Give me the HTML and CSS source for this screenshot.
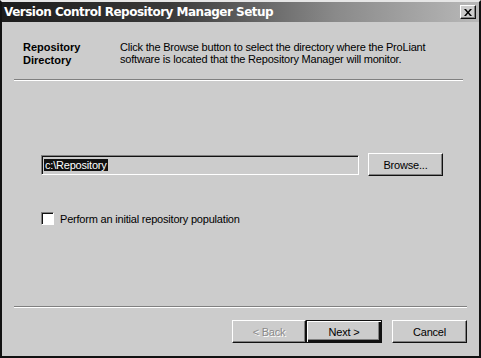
FILE: index.html
```html
<!DOCTYPE html>
<html lang="en">
<head>
  <meta charset="UTF-8">
  <title>Version Control Repository Manager Setup</title>
  <link rel="stylesheet" href="styles.css">
</head>

<body>
  <div class="window">
    <div class="titlebar">
      <span class="title">Version Control Repository Manager Setup</span>
      <button class="close" type="button">
        <svg width="8" height="7" viewBox="0 0 8 7">
          <path d="M0 0h2l2 2.5L6 0h2L5 3.5 8 7H6L4 4.5 2 7H0l3-3.5z" fill="#000"/>
        </svg>
      </button>
    </div>

    <div class="header">
      <div class="heading">Repository<br>Directory</div>
      <p class="intro">Click the Browse button to select the directory where the ProLiant software is located that the Repository Manager will monitor.</p>
    </div>
    <hr class="sep">

    <div class="body">
      <div class="pathrow">
        <div class="field"><span class="selected">c:\Repository</span></div>
        <button class="btn" type="button">Browse...</button>
      </div>
      <label class="check">
        <span class="box"></span>
        Perform an initial repository population
      </label>
    </div>

    <hr class="sep bottom">
    <div class="footer">
      <button class="btn disabled" type="button">&lt; Back</button>
      <button class="btn default" type="button">Next &gt;</button>
      <button class="btn cancel" type="button">Cancel</button>
    </div>
  </div>
</body>
</html>
```

FILE: styles.css
```css
html, body {
  margin: 0;
  padding: 0;
}
body {
  font-family: "Liberation Sans", Arial, sans-serif;
  font-size: 11px;
  letter-spacing: -0.2px;
  color: #000;
  background: #cccccc;
}
.window {
  box-sizing: border-box;
  width: 481px;
  height: 358px;
  background: #cccccc;
  border-top: 2px solid #e6e6e6;
  border-left: 2px solid #111;
  border-right: 2px solid #111;
  border-bottom: 2px solid #111;
  display: flex;
  flex-direction: column;
}

/* title bar */
.titlebar {
  height: 20px;
  display: flex;
  align-items: center;
  justify-content: space-between;
  padding: 0 3px 0 2px;
  background: linear-gradient(to right, #1c1c1c 0%, #3a3a3a 35%, #8a8a8a 70%, #b8b8b8 100%);
}
.title {
  color: #fff;
  font-family: "DejaVu Sans", Verdana, sans-serif;
  font-weight: bold;
  font-size: 12px;
  letter-spacing: -0.5px;
}
.close {
  box-sizing: border-box;
  width: 16px;
  height: 14px;
  padding: 0;
  display: flex;
  align-items: center;
  justify-content: center;
  background: #cccccc;
  border: 1px solid;
  border-color: #fff #111 #111 #fff;
  box-shadow: inset -1px -1px 0 #808080;
}

/* header */
.header {
  display: flex;
  padding: 19px 0 0 21px;
  height: 38px;
}
.heading {
  width: 97px;
  font-weight: bold;
  font-size: 11px;
  letter-spacing: 0;
  line-height: 13px;
}
.intro {
  margin: 0;
  width: 330px;
  line-height: 12px;
}
.sep {
  margin: 0 16px 0 12px;
  height: 0;
  border: 0;
  border-top: 1px solid #808080;
  border-bottom: 1px solid #fff;
}
.sep.bottom {
  margin-right: 12px;
}

/* body */
.body {
  flex: 1;
  padding: 72px 0 0 39px;
}
.pathrow {
  display: flex;
  align-items: center;
}
.field {
  box-sizing: border-box;
  width: 318px;
  height: 20px;
  background: #cccccc;
  border: 1px solid;
  border-color: #808080 #fff #fff #808080;
  box-shadow: inset 1px 1px 0 #111;
  padding: 3px 0 0 2px;
}
.selected {
  background: #111;
  color: #fff;
  padding: 0 1px;
}
.pathrow .btn {
  margin-left: 9px;
}
.check {
  display: flex;
  align-items: center;
  margin-top: 36px;
  gap: 6px;
}
.box {
  box-sizing: border-box;
  width: 13px;
  height: 13px;
  background: #fff;
  border: 1px solid;
  border-color: #808080 #fff #fff #808080;
  box-shadow: inset 1px 1px 0 #111;
}

/* buttons */
.btn {
  box-sizing: border-box;
  width: 75px;
  height: 23px;
  font-family: "Liberation Sans", Arial, sans-serif;
  font-size: 11px;
  letter-spacing: -0.2px;
  color: #000;
  background: #cccccc;
  border: 1px solid;
  border-color: #fff #111 #111 #fff;
  box-shadow: inset -1px -1px 0 #808080;
  padding: 0;
}
.footer {
  display: flex;
  justify-content: flex-end;
  padding: 12px 12px 13px 0;
}
.btn.disabled {
  width: 74px;
  color: #8a8a8a;
  text-shadow: 1px 1px 0 #fff;
}
.btn.default {
  width: 76px;
  border: 1px solid #111;
  box-shadow: inset 1px 1px 0 #fff, inset -2px -2px 0 #111, inset -3px -3px 0 #808080;
}
.btn.cancel {
  margin-left: 10px;
}
```
